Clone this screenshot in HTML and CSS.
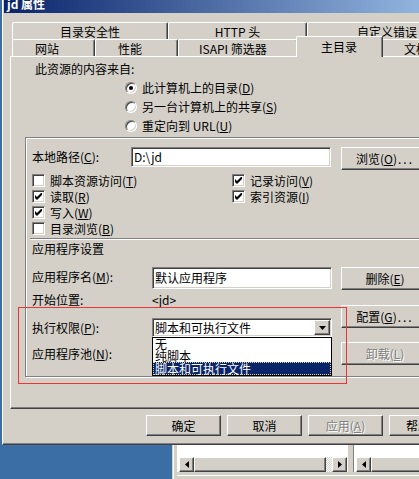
FILE: index.html
```html
<!DOCTYPE html>
<html lang="zh-CN">
<head>
<meta charset="utf-8">
<title>jd 属性</title>
<link rel="stylesheet" href="styles.css">
</head>
<body>
<div class="screen">
  <div class="dialog">
    <div class="titlebar"><span class="title-text">jd 属性</span></div>
    <div class="dlg-body">
      <div class="tabrow back">
        <div class="tab t-dirsec">目录安全性</div>
        <div class="tab t-http">HTTP 头</div>
        <div class="tab t-err">自定义错误</div>
      </div>
      <div class="tabrow front">
        <div class="tab t-site">网站</div>
        <div class="tab t-perf">性能</div>
        <div class="tab t-isapi">ISAPI 筛选器</div>
        <div class="tab t-home sel">主目录</div>
        <div class="tab t-doc">文档</div>
      </div>
      <div class="panel">
        <div class="source-title">此资源的内容来自:</div>
        <div class="radios">
          <div class="radio-row"><span class="radio on"></span><span>此计算机上的目录(<u>D</u>)</span></div>
          <div class="radio-row"><span class="radio"></span><span>另一台计算机上的共享(<u>S</u>)</span></div>
          <div class="radio-row"><span class="radio"></span><span>重定向到 URL(<u>U</u>)</span></div>
        </div>
        <div class="frame">
          <div class="path-row">
            <div class="lbl">本地路径(<u>C</u>):</div>
            <div class="field path-input">D:\jd</div>
            <div class="btn side-btn">浏览(<u>O</u>)<span class="dots">...</span></div>
          </div>
          <div class="checks">
            <div class="chk-row"><span class="chk"></span><span>脚本资源访问(<u>T</u>)</span></div>
            <div class="chk-row"><span class="chk"><svg class="tick" width="7" height="7" viewBox="0 0 7 7"><path d="M0 2 L2 4 L6 0 L7 0 L7 2 L2 7 L0 5 Z"/></svg></span><span>读取(<u>R</u>)</span></div>
            <div class="chk-row"><span class="chk"><svg class="tick" width="7" height="7" viewBox="0 0 7 7"><path d="M0 2 L2 4 L6 0 L7 0 L7 2 L2 7 L0 5 Z"/></svg></span><span>写入(<u>W</u>)</span></div>
            <div class="chk-row"><span class="chk"></span><span>目录浏览(<u>B</u>)</span></div>
            <div class="chk-row"><span class="chk"><svg class="tick" width="7" height="7" viewBox="0 0 7 7"><path d="M0 2 L2 4 L6 0 L7 0 L7 2 L2 7 L0 5 Z"/></svg></span><span>记录访问(<u>V</u>)</span></div>
            <div class="chk-row"><span class="chk"><svg class="tick" width="7" height="7" viewBox="0 0 7 7"><path d="M0 2 L2 4 L6 0 L7 0 L7 2 L2 7 L0 5 Z"/></svg></span><span>索引资源(<u>I</u>)</span></div>
          </div>
          <div class="sep"></div>
          <div class="app-title">应用程序设置</div>
          <div class="lower">
            <div class="lower-left">
              <div class="row app-row">
                <div class="lbl">应用程序名(<u>M</u>):</div>
                <div class="field app-input">默认应用程序</div>
              </div>
              <div class="row start-row">
                <div class="lbl">开始位置:</div>
                <div class="start-val">&lt;jd&gt;</div>
              </div>
              <div class="row exec-row">
                <div class="lbl">执行权限(<u>P</u>):</div>
                <div class="combo-wrap">
                  <div class="combo">
                    <span class="combo-text">脚本和可执行文件</span>
                    <span class="btn combo-btn"><svg width="7" height="4" viewBox="0 0 7 4"><path d="M0 0 H7 L3.5 4 Z"/></svg></span>
                  </div>
                  <div class="list">
                    <div class="list-item">无</div>
                    <div class="list-item">纯脚本</div>
                    <div class="list-item hl">脚本和可执行文件</div>
                  </div>
                </div>
              </div>
              <div class="row pool-row">
                <div class="lbl">应用程序池(<u>N</u>):</div>
                <div class="combo">
                  <span class="combo-text"></span>
                  <span class="btn combo-btn"><svg width="7" height="4" viewBox="0 0 7 4"><path d="M0 0 H7 L3.5 4 Z"/></svg></span>
                </div>
              </div>
            </div>
            <div class="lower-right">
              <div class="btn side-btn">删除(<u>E</u>)</div>
              <div class="btn side-btn cfg-btn">配置(<u>G</u>)<span class="dots">...</span></div>
              <div class="btn side-btn unload-btn disabled">卸载(<u>L</u>)</div>
            </div>
          </div>
        </div>
      </div>
      <div class="dlg-buttons">
        <div class="btn dlg-btn">确定</div>
        <div class="btn dlg-btn">取消</div>
        <div class="btn dlg-btn disabled">应用(<u>A</u>)</div>
        <div class="btn dlg-btn">帮助(<u>H</u>)</div>
      </div>
    </div>
  </div>
  <div class="under">
    <div class="desk"></div>
    <div class="win">
      <div class="win-main">
        <div class="pane pane1">
          <div class="pane-white"></div>
          <div class="hscroll">
            <span class="btn sb-btn"><svg width="4" height="7" viewBox="0 0 4 7"><path d="M4 0 L0 3.5 L4 7 Z"/></svg></span>
            <span class="btn sb-thumb"></span>
            <span class="sb-dither"></span>
            <span class="btn sb-btn"><svg width="4" height="7" viewBox="0 0 4 7"><path d="M0 0 L4 3.5 L0 7 Z"/></svg></span>
          </div>
        </div>
        <div class="splitter"></div>
        <div class="pane pane2">
          <div class="pane-white"></div>
          <div class="hscroll">
            <span class="btn sb-btn"><svg width="4" height="7" viewBox="0 0 4 7"><path d="M4 0 L0 3.5 L4 7 Z"/></svg></span>
            <span class="btn sb-thumb wide"></span>
          </div>
        </div>
      </div>
      <div class="win-bottom"></div>
    </div>
  </div>
  <div class="redbox"></div>
</div>
</body>
</html>
```

FILE: styles.css
```css
* {
  box-sizing: border-box;
  margin: 0;
  padding: 0;
}

html, body {
  width: 419px;
  height: 479px;
  overflow: hidden;
}

body {
  font-family: "Noto Sans CJK SC", "Noto Sans", sans-serif;
  font-size: 12px;
  line-height: 13px;
  color: #000;
  background: #3a6ea5;
}

u {
  text-decoration: underline;
  text-underline-offset: 1px;
}

.screen {
  position: relative;
  width: 419px;
  height: 479px;
  overflow: hidden;
  background: #3a6ea5;
}

/* ---------- dialog frame ---------- */
.dialog {
  margin-left: 2px;
  width: 480px;
  height: 445px;
  background: #d4d0c8;
  border-left: 1px solid #fff;
  padding-left: 1px;
  border-bottom: 1px solid #404040;
  box-shadow: inset 0 -1px 0 #808080;
}

.titlebar {
  height: 13px;
  overflow: hidden;
  background: linear-gradient(to right, #0a246a, #a6caf0);
  color: #fff;
  font-weight: bold;
  padding-left: 3px;
}

.title-text {
  display: block;
  line-height: 12px;
  margin-top: -2px;
}

.dlg-body {
  padding-left: 6px;
}

/* ---------- tabs ---------- */
.tabrow {
  display: flex;
  height: 17px;
  margin-left: 2px;
}

.tabrow.back {
  margin-top: 9px;
}

.tab {
  flex: none;
  height: 17px;
  background: #d4d0c8;
  border-top: 1px solid #fff;
  border-left: 1px solid #fff;
  border-right: 1px solid #404040;
  box-shadow: inset -1px 0 0 #808080;
  border-radius: 2px 2px 0 0;
  padding-top: 1px;
  line-height: 15px;
  white-space: nowrap;
}

.back .tab {
  text-align: center;
}

.front .tab {
  padding-left: 22px;
}

.t-dirsec { width: 156px; }
.t-http { width: 139px; }
.t-err { width: 160px; }
.t-site { width: 83px; }
.t-perf { width: 83px; }
.t-isapi { width: 120px; padding-left: 20px !important; }
.t-home { width: 87px; }
.t-doc { width: 90px; }

.tab.sel {
  position: relative;
  z-index: 2;
  height: 21px;
  margin: -3px -2px 0;
  padding-top: 2px;
  padding-left: 24px;
}

/* ---------- panel ---------- */
.panel {
  width: 470px;
  height: 353px;
  border-top: 1px solid #fff;
  border-left: 1px solid #fff;
  border-bottom: 1px solid #404040;
  box-shadow: inset 0 -1px 0 #808080;
}

.source-title {
  margin-top: 5px;
  padding-left: 24px;
}

.radios {
  margin-top: 6px;
  padding-left: 114px;
  display: flex;
  flex-direction: column;
  gap: 6px;
}

.radio-row {
  display: flex;
  align-items: center;
  gap: 5px;
  height: 13px;
  white-space: nowrap;
}

.radio {
  position: relative;
  flex: none;
  width: 12px;
  height: 12px;
  border-radius: 50%;
  background: #fff;
  border: 1px solid;
  border-color: #808080 #fff #fff #808080;
  box-shadow: inset 1px 1px 0 #404040, inset -1px -1px 0 #d4d0c8;
}

.radio.on::after {
  content: "";
  position: absolute;
  left: 3px;
  top: 3px;
  width: 4px;
  height: 4px;
  border-radius: 50%;
  background: #000;
}

.frame {
  margin: 5px 0 0 14px;
  width: 450px;
  height: 240px;
  border: 1px solid #808080;
  box-shadow: 1px 1px 0 #fff, inset 1px 1px 0 #fff;
}

.lbl {
  flex: none;
  padding-left: 6px;
  white-space: nowrap;
}

.path-row {
  display: flex;
  align-items: flex-start;
  margin-top: 9px;
}

.path-row .lbl {
  width: 105px;
  line-height: 20px;
}

.field {
  background: #fff;
  border: 1px solid;
  border-color: #808080 #fff #fff #808080;
  box-shadow: inset 1px 1px 0 #404040, inset -1px -1px 0 #d4d0c8;
  white-space: nowrap;
  overflow: hidden;
}

.path-input {
  flex: none;
  width: 200px;
  height: 20px;
  padding: 1px 0 0 2px;
  line-height: 16px;
}

.btn {
  flex: none;
  display: flex;
  align-items: center;
  justify-content: center;
  background: #d4d0c8;
  border: 1px solid;
  border-color: #fff #404040 #404040 #fff;
  box-shadow: inset -1px -1px 0 #808080;
  white-space: nowrap;
}

.dots {
  letter-spacing: 2px;
  margin-left: 1px;
}

.side-btn {
  width: 88px;
  height: 23px;
}

.path-row .side-btn {
  margin-left: 10px;
}

.checks {
  display: grid;
  grid-template-columns: 200px auto;
  grid-template-rows: repeat(4, 13px);
  grid-auto-flow: column;
  row-gap: 3px;
  margin-top: 4px;
  padding-left: 6px;
}

.chk-row {
  display: flex;
  align-items: center;
  gap: 5px;
  white-space: nowrap;
}

.chk {
  flex: none;
  width: 13px;
  height: 13px;
  background: #fff;
  border: 1px solid;
  border-color: #808080 #fff #fff #808080;
  box-shadow: inset 1px 1px 0 #404040, inset -1px -1px 0 #d4d0c8;
  padding: 2px 0 0 2px;
}

.tick {
  display: block;
  fill: #000;
}

.sep {
  margin: 3px 0 0 4px;
  height: 2px;
  border-top: 1px solid #808080;
  border-bottom: 1px solid #fff;
}

.app-title {
  margin-top: 2px;
  padding-left: 6px;
}

.lower {
  display: flex;
  margin-top: 12px;
}

.lower-left {
  flex: none;
  width: 306px;
}

.row {
  display: flex;
  align-items: center;
}

.row .lbl {
  width: 126px;
}

.app-row .lbl {
  line-height: 20px;
  align-self: flex-start;
}

.app-input {
  width: 180px;
  height: 22px;
  padding: 2px 0 0 2px;
  line-height: 16px;
}

.start-row {
  margin-top: 4px;
  height: 13px;
}

.exec-row {
  margin-top: 12px;
}

.exec-row .lbl,
.pool-row .lbl {
  line-height: 19px;
}

.pool-row {
  margin-top: 7px;
}

.combo-wrap {
  position: relative;
  width: 180px;
  height: 19px;
}

.combo {
  display: flex;
  align-items: center;
  width: 180px;
  height: 19px;
  padding: 1px;
  background: #fff;
  border: 1px solid;
  border-color: #808080 #fff #fff #808080;
  box-shadow: inset 1px 1px 0 #404040, inset -1px -1px 0 #d4d0c8;
}

.combo-text {
  flex: 1;
  padding-left: 1px;
  line-height: 15px;
  white-space: nowrap;
  overflow: hidden;
}

.combo-btn {
  width: 16px;
  height: 15px;
}

.combo-btn svg,
.sb-btn svg {
  display: block;
  fill: #000;
}

.list {
  position: absolute;
  left: 0;
  top: 19px;
  z-index: 3;
  width: 180px;
  height: 39px;
  background: #fff;
  border: 1px solid #000;
}

.list-item {
  height: 12px;
  line-height: 12px;
  padding-left: 2px;
  white-space: nowrap;
}

.list-item.hl {
  height: 13px;
  line-height: 11px;
  padding-left: 1px;
  background: #0a246a;
  color: #fff;
  border: 1px dotted #e6d690;
}

.lower-right {
  display: flex;
  flex-direction: column;
  margin-left: 9px;
}

.cfg-btn {
  margin-top: 15px;
}

.unload-btn {
  margin-top: 14px;
}

.disabled {
  color: #808080;
  text-shadow: 1px 1px 0 #fff;
}

.dlg-buttons {
  display: flex;
  gap: 6px;
  margin-top: 6px;
  padding-left: 136px;
}

.dlg-btn {
  width: 75px;
  height: 21px;
}

/* ---------- window underneath ---------- */
.under {
  display: flex;
  height: 34px;
}

.desk {
  flex: none;
  width: 172px;
}

.win {
  flex: 1;
  display: flex;
  flex-direction: column;
  background: #d4d0c8;
  border-left: 1px solid #d4d0c8;
  padding-left: 4px;
  box-shadow: inset 1px 0 0 #fff;
}

.win-main {
  display: flex;
  height: 27px;
}

.pane {
  display: flex;
  flex-direction: column;
  background: #fff;
  padding-left: 2px;
}

.pane1 {
  flex: none;
  width: 171px;
}

.pane2 {
  flex: 1;
}

.pane-white {
  height: 12px;
}

.hscroll {
  display: flex;
  height: 15px;
}

.sb-btn {
  width: 15px;
  height: 15px;
}

.sb-thumb {
  width: 132px;
  height: 15px;
}

.sb-thumb.wide {
  flex: 1;
}

.sb-dither {
  flex: none;
  width: 6px;
  height: 15px;
  background: repeating-conic-gradient(#d4d0c8 0 25%, #fff 0 50%) 0 0 / 2px 2px;
}

.splitter {
  flex: none;
  width: 6px;
  background: #d4d0c8;
  box-shadow: inset -1px 0 0 #808080;
}

.win-bottom {
  flex: 1;
  border-top: 3px solid #d4d0c8;
  box-shadow: inset 0 1px 0 #fff;
}

/* ---------- annotation ---------- */
.redbox {
  position: absolute;
  left: 18px;
  top: 307px;
  width: 329px;
  height: 77px;
  border: 1px solid #ee3535;
  pointer-events: none;
}
```
